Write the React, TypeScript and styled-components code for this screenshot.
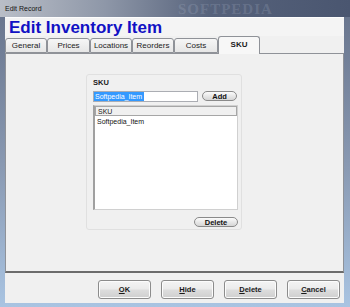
import React from "react";
import styled, { createGlobalStyle } from "styled-components";

const GlobalStyle = createGlobalStyle`
    html, body {
        margin: 0;
        padding: 0;
        width: 350px;
        height: 307px;
        overflow: hidden;
        font-family: "Liberation Sans", Arial, sans-serif;
    }
`;

const Window = styled.div`
    width: 350px;
    height: 307px;
    display: flex;
    flex-direction: column;
    background: linear-gradient(180deg, #66728a 0%, #8a9ab3 55%, #a9c4e2 100%);
    box-sizing: border-box;
`;

const TitleBar = styled.div`
    height: 17px;
    display: flex;
    align-items: center;
    padding-left: 5px;
    position: relative;
    background: linear-gradient(90deg, #b9bec7 0%, #8e97a8 30%, #56627b 60%, #4a5670 100%);
    font-size: 7px;
    color: #141414;
`;

const Watermark = styled.span`
    position: absolute;
    left: 178px;
    top: 1px;
    font-family: "Liberation Serif", serif;
    font-size: 15px;
    font-weight: bold;
    letter-spacing: 1px;
    color: rgba(200, 210, 228, 0.18);
`;

const Client = styled.div`
    flex: 1;
    margin: 0 6px 4px 5px;
    display: flex;
    flex-direction: column;
    background: #f0f0f0;
    border-top: 1px solid #fdfdfd;
`;

const Heading = styled.h1`
    margin: 0;
    height: 18px;
    padding-left: 4px;
    font-size: 17px;
    line-height: 19px;
    font-weight: bold;
    color: #1111c4;
    background: #f4f4f4;
`;

const TabRow = styled.div`
    height: 17px;
    display: flex;
    align-items: flex-end;
    position: relative;
    z-index: 1;
`;

const Tab = styled.div<{ $active?: boolean; $w: number }>`
    width: ${({ $w }) => $w}px;
    height: ${({ $active }) => ($active ? 18 : 15)}px;
    margin-bottom: ${({ $active }) => ($active ? -1 : 0)}px;
    box-sizing: border-box;
    border: 1px solid #8f9298;
    border-bottom: ${({ $active }) => ($active ? "none" : "1px solid #8f9298")};
    border-radius: 3px 3px 0 0;
    background: ${({ $active }) =>
        $active ? "#f7f7f7" : "linear-gradient(180deg, #f6f6f6 0%, #e6e6e6 100%)"};
    display: flex;
    align-items: center;
    justify-content: center;
    font-size: 8px;
    font-weight: ${({ $active }) => ($active ? "bold" : "normal")};
    color: #1b1b1b;
    padding-bottom: ${({ $active }) => ($active ? 2 : 0)}px;
`;

const Panel = styled.div`
    height: 220px;
    box-sizing: border-box;
    border: 1px solid #8f9298;
    border-bottom: 2px solid #6c6c6c;
    background: #f0f0f0;
    padding: 20px 0 0 80px;
`;

const GroupBox = styled.div`
    width: 156px;
    height: 156px;
    box-sizing: border-box;
    border: 1px solid #e0e0e0;
    border-radius: 3px;
    padding: 3px 4px 0 6px;
    display: flex;
    flex-direction: column;
`;

const GroupLabel = styled.div`
    font-size: 7.5px;
    font-weight: bold;
    color: #1a1a1a;
    height: 13px;
`;

const InputRow = styled.div`
    display: flex;
    align-items: flex-start;
    gap: 4px;
    height: 14px;
`;

const TextInput = styled.div`
    width: 106px;
    height: 11px;
    box-sizing: border-box;
    border: 1px solid #abadb3;
    background: #fff;
    display: flex;
    align-items: center;
    font-size: 7px;
`;

const Selected = styled.span`
    background: #3399ff;
    color: #fff;
    padding: 0 2px 0 1px;
    line-height: 9px;
`;

const PillButton = styled.div<{ $w: number }>`
    width: ${({ $w }) => $w}px;
    height: 10px;
    box-sizing: border-box;
    border: 1px solid #8a8a8a;
    border-radius: 5px;
    background: linear-gradient(180deg, #fbfbfb 0%, #e8e8e8 50%, #d6d6d6 100%);
    display: flex;
    align-items: center;
    justify-content: center;
    font-size: 7.5px;
    font-weight: bold;
    color: #111;
`;

const List = styled.div`
    width: 145px;
    height: 105px;
    box-sizing: border-box;
    border: 1px solid #d0d0d0;
    border-left: 2px solid #a0a0a0;
    background: #fff;
    display: flex;
    flex-direction: column;
`;

const ListHeader = styled.div`
    height: 10px;
    box-sizing: border-box;
    border: 1px solid #a6a6a6;
    background: #f0f0f0;
    font-size: 7px;
    padding-left: 2px;
    display: flex;
    align-items: center;
    color: #222;
`;

const ListItem = styled.div`
    font-size: 7px;
    padding: 2px 0 0 2px;
    color: #111;
`;

const GroupFooter = styled.div`
    display: flex;
    justify-content: flex-end;
    padding: 7px 0 0 0;
    width: 145px;
`;

const ButtonBar = styled.div`
    flex: 1;
    display: flex;
    justify-content: flex-end;
    align-items: flex-start;
    gap: 10px;
    padding: 7px 4px 0 0;
`;

const DialogButton = styled.button`
    width: 53px;
    height: 19px;
    margin: 0;
    padding: 0;
    border: 1px solid #8c8c8c;
    border-radius: 3px;
    background: linear-gradient(180deg, #f4f4f4 0%, #ebebeb 48%, #dddddd 52%, #cfcfcf 100%);
    font-family: "Liberation Sans", Arial, sans-serif;
    font-size: 7.5px;
    font-weight: bold;
    color: #1a1a1a;
    box-shadow: inset 0 0 0 1px #fcfcfc;
    u {
        text-decoration: underline;
    }
`;

const tabs = [
    { label: "General", w: 42 },
    { label: "Prices", w: 43 },
    { label: "Locations", w: 42 },
    { label: "Reorders", w: 42 },
    { label: "Costs", w: 44 },
    { label: "SKU", w: 42, active: true },
];

const App: React.FC = () => {
    return (
        <>
            <GlobalStyle />
            <Window>
                <TitleBar>
                    Edit Record
                    <Watermark>SOFTPEDIA</Watermark>
                </TitleBar>
                <Client>
                    <Heading>Edit Inventory Item</Heading>
                    <TabRow>
                        {tabs.map((t) => (
                            <Tab key={t.label} $w={t.w} $active={t.active}>
                                {t.label}
                            </Tab>
                        ))}
                    </TabRow>
                    <Panel>
                        <GroupBox>
                            <GroupLabel>SKU</GroupLabel>
                            <InputRow>
                                <TextInput>
                                    <Selected>Softpedia_Item</Selected>
                                </TextInput>
                                <PillButton $w={35}>Add</PillButton>
                            </InputRow>
                            <List>
                                <ListHeader>SKU</ListHeader>
                                <ListItem>Softpedia_Item</ListItem>
                            </List>
                            <GroupFooter>
                                <PillButton $w={44}>Delete</PillButton>
                            </GroupFooter>
                        </GroupBox>
                    </Panel>
                    <ButtonBar>
                        <DialogButton>
                            <u>O</u>K
                        </DialogButton>
                        <DialogButton>
                            <u>H</u>ide
                        </DialogButton>
                        <DialogButton>
                            <u>D</u>elete
                        </DialogButton>
                        <DialogButton>
                            <u>C</u>ancel
                        </DialogButton>
                    </ButtonBar>
                </Client>
            </Window>
        </>
    );
};

export default App;
